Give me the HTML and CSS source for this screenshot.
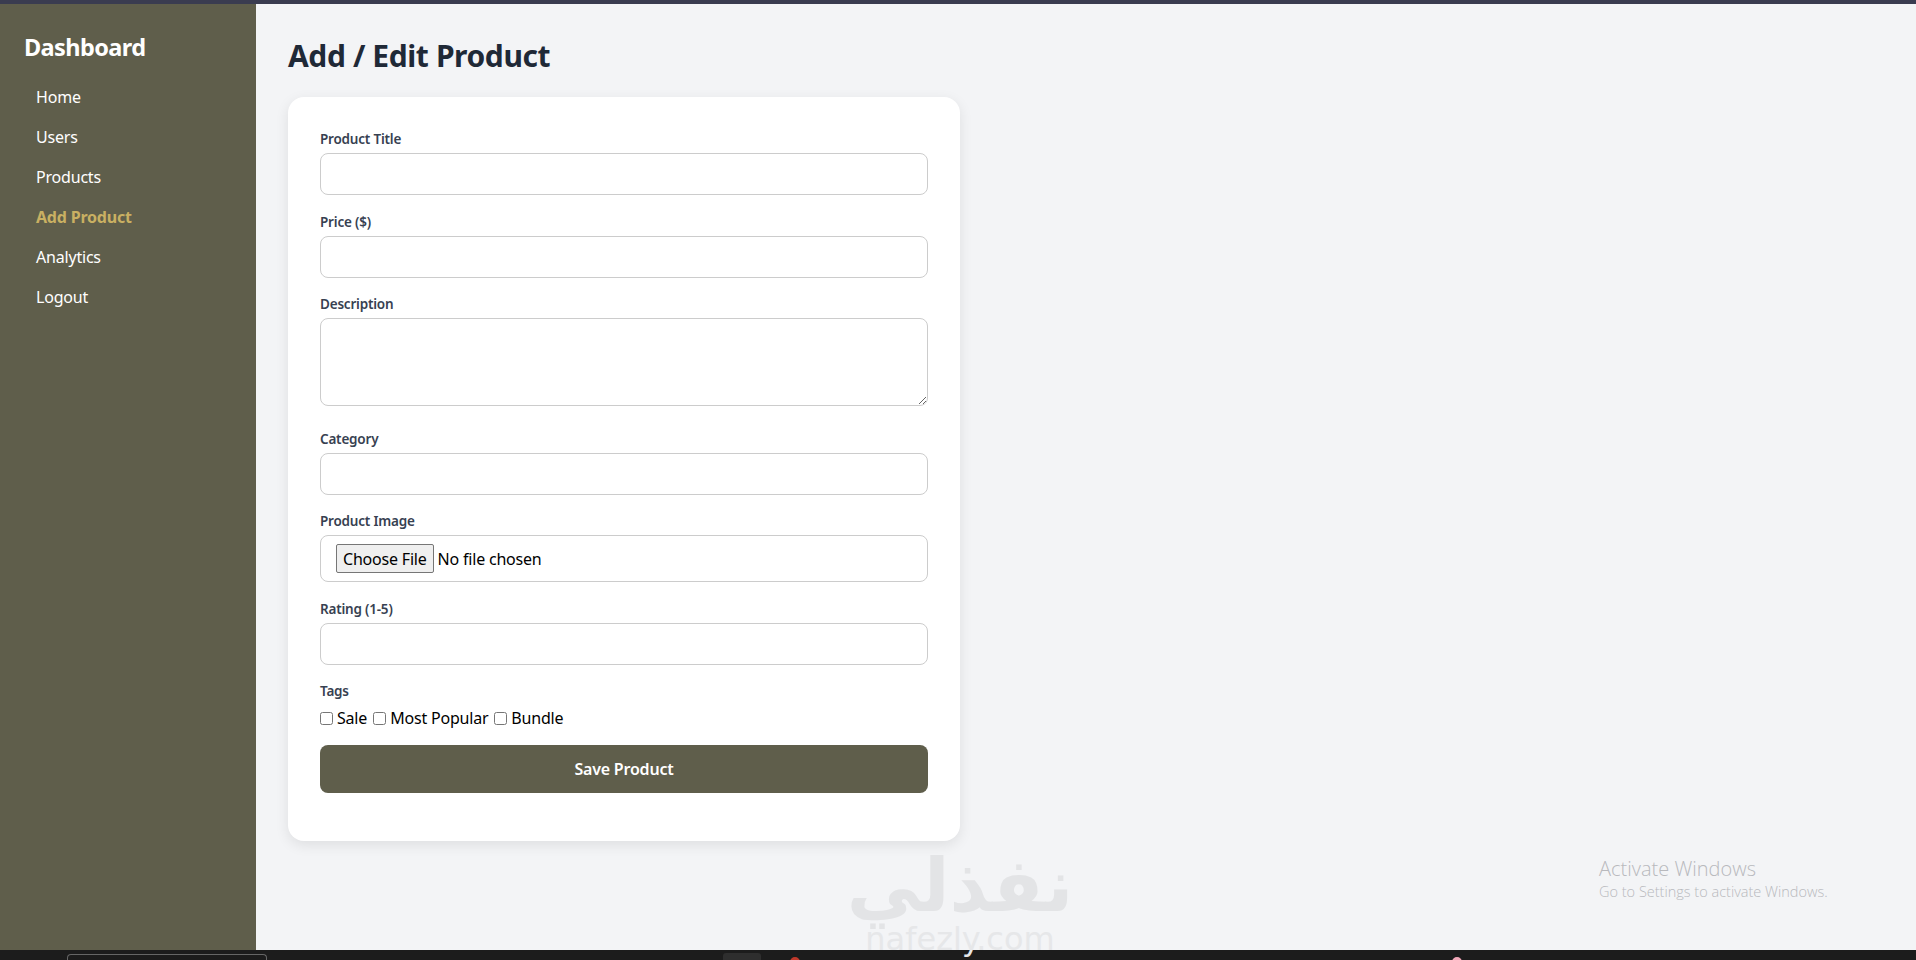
FILE: index.html
```html
<!DOCTYPE html>
<html lang="en">
<head>
<meta charset="utf-8">
<title>Add / Edit Product</title>
<link rel="stylesheet" href="styles.css">
</head>
<body>
<div class="topbar"></div>
<div class="layout">
  <aside class="sidebar">
    <h2 class="brand">Dashboard</h2>
    <nav class="nav">
      <a class="nav-link" href="#">Home</a>
      <a class="nav-link" href="#">Users</a>
      <a class="nav-link" href="#">Products</a>
      <a class="nav-link active" href="#">Add Product</a>
      <a class="nav-link" href="#">Analytics</a>
      <a class="nav-link" href="#">Logout</a>
    </nav>
  </aside>
  <main class="main">
    <h1 class="page-title">Add / Edit Product</h1>
    <form class="card">
      <label class="field-label" for="title">Product Title</label>
      <input class="field" id="title" type="text">
      <label class="field-label" for="price">Price ($)</label>
      <input class="field" id="price" type="text">
      <label class="field-label" for="desc">Description</label>
      <textarea class="field area" id="desc"></textarea>
      <label class="field-label" for="cat">Category</label>
      <input class="field" id="cat" type="text">
      <label class="field-label" for="img">Product Image</label>
      <input class="field file" id="img" type="file">
      <label class="field-label" for="rating">Rating (1-5)</label>
      <input class="field" id="rating" type="text">
      <div class="field-label">Tags</div>
      <div class="tags">
        <label class="tag"><input class="check" type="checkbox">Sale</label>
        <label class="tag"><input class="check" type="checkbox">Most Popular</label>
        <label class="tag"><input class="check" type="checkbox">Bundle</label>
      </div>
      <button class="save" type="button">Save Product</button>
    </form>
  </main>
</div>
<div class="taskbar">
  <span class="tb-search"></span>
  <span class="tb-icon"></span>
  <span class="tb-dot red"></span>
  <span class="tb-dot pink"></span>
</div>
<div class="watermark">
  <div class="wm-ar">نفذلي</div>
  <div class="wm-en">nafezly.com</div>
</div>
<div class="activate">
  <div class="act-title">Activate Windows</div>
  <div class="act-sub">Go to Settings to activate Windows.</div>
</div>
</body>
</html>
```

FILE: styles.css
```css
* { box-sizing: border-box; }
html, body { margin: 0; padding: 0; }
body {
  width: 1916px;
  height: 960px;
  overflow: hidden;
  font-family: "Noto Sans", "Open Sans", sans-serif;
  background: #f3f4f6;
  position: relative;
}
.topbar { height: 4px; background: #3a3c50; }
.layout { display: flex; height: 946px; }
.sidebar {
  width: 256px;
  flex: none;
  background: #5f5e4b;
  padding: 26px 0 0 24px;
}
.brand {
  margin: 0 0 13px;
  color: #fff;
  font-size: 23.5px;
  font-weight: 700;
  line-height: 34px;
  letter-spacing: -0.6px;
}
.nav { display: flex; flex-direction: column; padding-left: 12px; margin-top: 0.5px; }
.nav-link {
  color: #fff;
  text-decoration: none;
  font-size: 16px;
  line-height: 40px;
  letter-spacing: -0.2px;
}
.nav-link.active { color: #c9b062; font-weight: 700; }
.main { flex: 1; padding: 33px 32px 0; }
.page-title {
  margin: 0 0 22px;
  color: #1f2937;
  font-size: 30px;
  font-weight: 700;
  line-height: 38px;
  letter-spacing: -0.4px;
}
.card {
  width: 672px;
  background: #fff;
  border-radius: 16px;
  padding: 32px 32px 48px;
  box-shadow: 0 4px 14px rgba(0, 0, 0, 0.09);
}
.field-label {
  display: block;
  font-size: 13.5px;
  font-weight: 600;
  line-height: 20px;
  color: #374151;
  margin-bottom: 4px;
  letter-spacing: -0.2px;
}
.field {
  display: block;
  width: 100%;
  height: 42px;
  margin: 0 0 16.5px;
  border: 1px solid #ccc;
  border-radius: 8px;
  padding: 10px;
  font-family: "Noto Sans", sans-serif;
  font-size: 16px;
  background: #fff;
}
.area { height: 88px; margin-bottom: 22.5px; resize: vertical; }
.file {
  height: 47px;
  padding: 8px 15px;
  font-size: 16px;
  color: #000;
  letter-spacing: -0.2px;
}
.file::file-selector-button {
  font-family: "Noto Sans", sans-serif;
  font-size: 16px;
  height: 29px;
  padding: 0 6px;
  margin-right: 4px;
  border: 1px solid #767676;
  border-radius: 2px;
  background: #efefef;
  color: #000;
  letter-spacing: -0.2px;
}
.tags { display: flex; gap: 6px; margin-top: 6px; font-size: 16px; line-height: 22px; }
.tag { display: inline-flex; align-items: center; gap: 4px; letter-spacing: -0.2px; }
.check { margin: 0; width: 13px; height: 13px; }
.save {
  display: block;
  width: 100%;
  height: 48px;
  margin-top: 16px;
  border: none;
  border-radius: 8px;
  background: #5f5e4b;
  color: #fff;
  font-family: "Noto Sans", sans-serif;
  font-size: 16px;
  font-weight: 600;
  letter-spacing: -0.2px;
}
.taskbar {
  height: 10px;
  background: #1c1c1c;
  position: relative;
}
.tb-search {
  position: absolute; left: 67px; top: 4px; width: 200px; height: 10px;
  border: 1px solid #666; border-radius: 4px 4px 0 0; border-bottom: none;
}
.tb-icon {
  position: absolute; left: 723px; top: 3px; width: 38px; height: 10px;
  background: #2e2e2e; border-radius: 3px;
}
.tb-dot { position: absolute; top: 7px; width: 10px; height: 10px; border-radius: 50%; }
.tb-dot.red { left: 790px; background: #c0392b; }
.tb-dot.pink { left: 1452px; background: #f1a7b8; }
.watermark {
  position: absolute;
  left: 845px;
  top: 845px;
  width: 230px;
  text-align: center;
  color: #e3e4e6;
  pointer-events: none;
}
.wm-ar { font-family: "DejaVu Sans", sans-serif; font-weight: 700; font-size: 74px; line-height: 80px; }
.wm-en { font-family: "DejaVu Sans", sans-serif; font-size: 32px; line-height: 34px; margin-top: -3px; color: #e6e7e9; }
.activate {
  position: absolute;
  left: 1599px;
  top: 856px;
  color: #b8b9bd;
  font-family: "Open Sans", sans-serif;
}
.act-title { font-size: 20px; line-height: 26px; font-weight: 300; }
.act-sub { font-size: 14.5px; line-height: 20px; font-weight: 300; }
```
